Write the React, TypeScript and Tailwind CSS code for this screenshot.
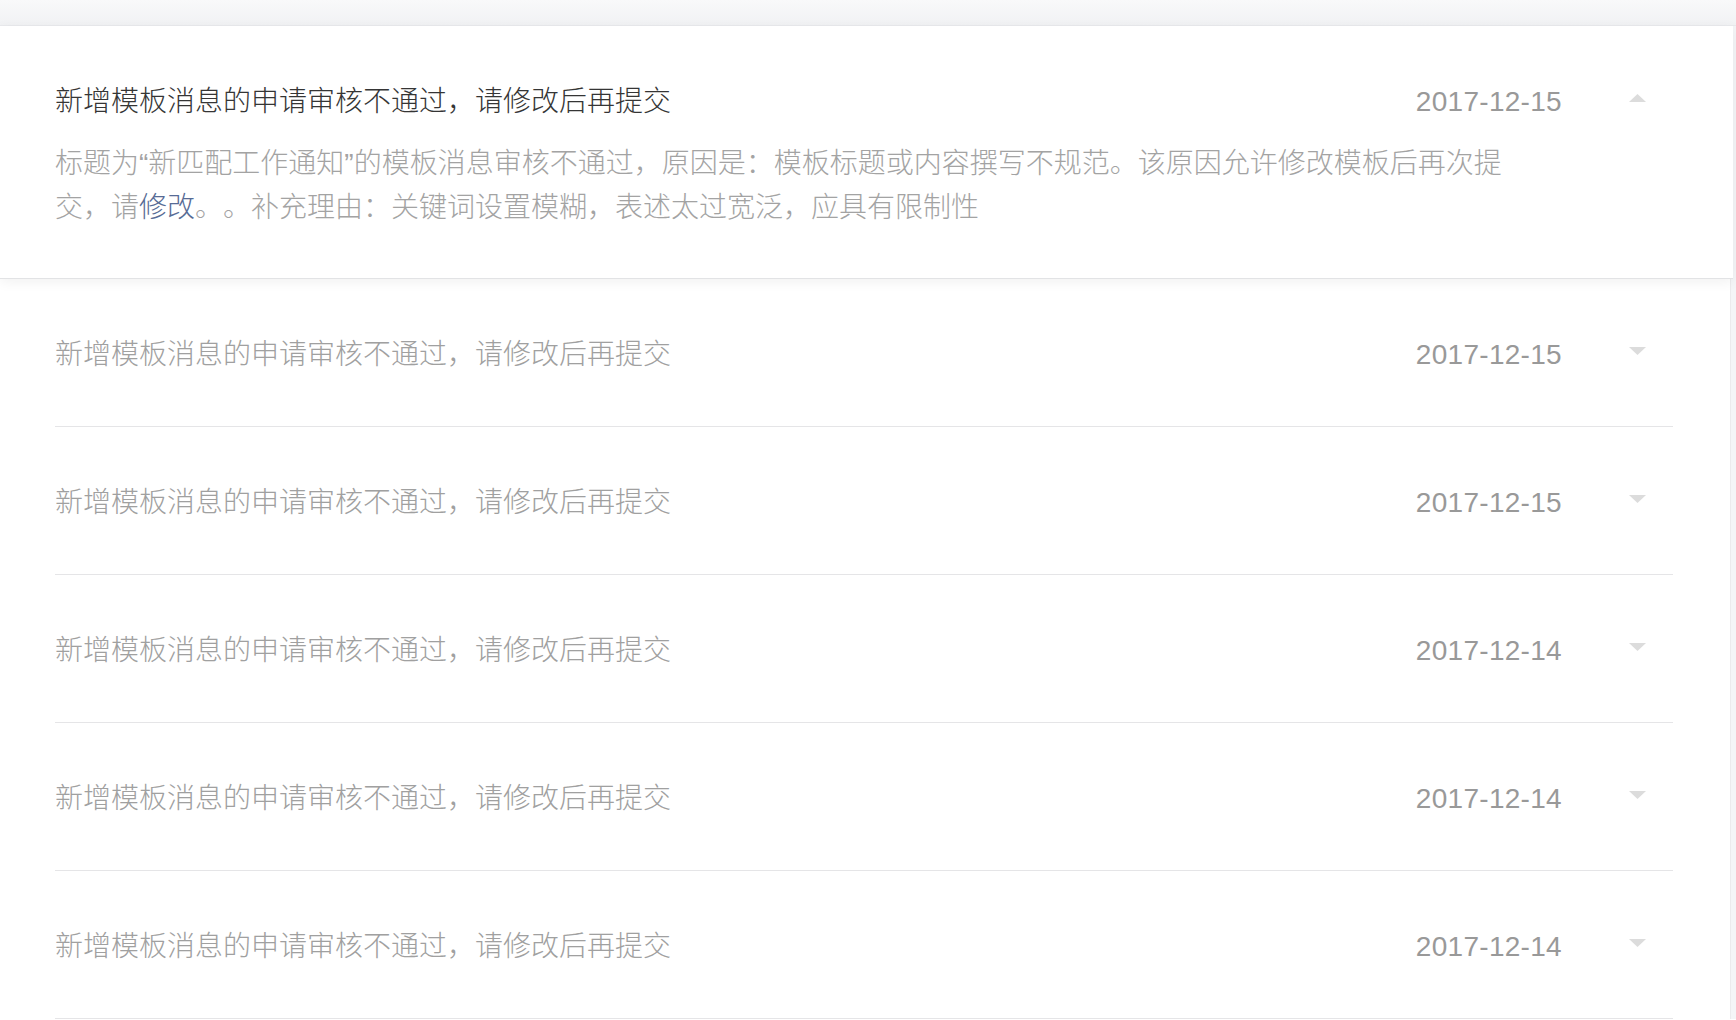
import React from "react";

const font = { fontFamily: '"Liberation Sans", "Noto Sans CJK SC", sans-serif' };

const items = [
  { date: "2017-12-15" },
  { date: "2017-12-15" },
  { date: "2017-12-14" },
  { date: "2017-12-14" },
  { date: "2017-12-14" },
];

const TITLE = "新增模板消息的申请审核不通过，请修改后再提交";

function Caret({ up }: { up?: boolean }) {
  return (
    <svg width="17" height="8" viewBox="0 0 17 8" className="block">
      {up ? <polygon points="0,8 17,8 8.5,0" fill="#dcdcdc" /> : <polygon points="0,0 17,0 8.5,8" fill="#dcdcdc" />}
    </svg>
  );
}

export default function App() {
  return (
    <div className="w-[1736px] min-h-screen bg-white text-[28px] leading-[44px] [text-spacing-trim:space-all]" style={font}>
      {/* top strip */}
      <div className="h-[26px] bg-gradient-to-b from-[#f9f9fa] to-[#f1f2f4] border-b border-[#e9eaed]" />

      <div className="bg-[#f4f5f7]">
        {/* expanded message */}
        <div className="w-[1733px] bg-white border-b border-[#e2e3e5] shadow-[0_3px_12px_rgba(0,0,0,0.06)] relative z-10">
          <div className="ml-[55px] w-[1618px] pt-[54px] pb-[48px]">
            <div className="flex items-center">
              <div className="flex-1 text-[#353535] font-light">{TITLE}</div>
              <div className="text-[#999999] tracking-[0.3px]">2017-12-15</div>
              <div className="ml-[67px] mr-[27px] mb-[8px]">
                <Caret up />
              </div>
            </div>
            <p className="mt-[18px] w-[1470px] text-[#a3a3a3] font-light">
              标题为“新匹配工作通知”的模板消息审核不通过，原因是：模板标题或内容撰写不规范。该原因允许修改模板后再次提交，请
              <span className="text-[#576b95]">修改</span>
              。。补充理由：关键词设置模糊，表述太过宽泛，应具有限制性
            </p>
          </div>
        </div>

        {/* collapsed messages */}
        <div className="w-[1731px] bg-white border-r border-[#ebebed]">
          {items.map((item, i) => (
            <div key={i} className="ml-[55px] w-[1618px] pt-[54px] pb-[49px] border-b border-[#e5e5e7] flex items-center">
              <div className="flex-1 text-[#a0a0a0] font-light">{TITLE}</div>
              <div className="text-[#999999] tracking-[0.3px]">{item.date}</div>
              <div className="ml-[67px] mr-[27px] mb-[8px]">
                <Caret />
              </div>
            </div>
          ))}
        </div>
      </div>
    </div>
  );
}
